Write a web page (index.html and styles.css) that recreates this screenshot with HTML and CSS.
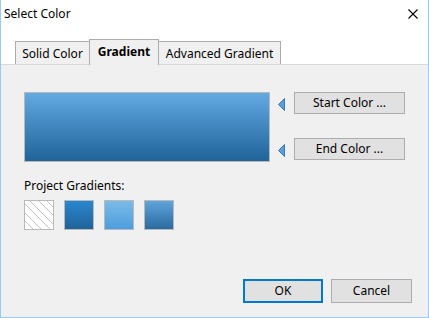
FILE: index.html
```html
<!DOCTYPE html>
<html>
<head>
<meta charset="utf-8">
<link rel="stylesheet" href="styles.css">
</head>
<body>
<div class="window">
  <div class="titlebar">
    <span class="title">Select Color</span>
    <svg class="close" width="10" height="10" viewBox="0 0 10 10"><path d="M0.5 0.5 L9.5 9.5 M9.5 0.5 L0.5 9.5" stroke="#000" stroke-width="1.1" fill="none"/></svg>
  </div>
  <div class="tabs">
    <div class="tab tab-solid">Solid Color</div>
    <div class="tab tab-grad active">Gradient</div>
    <div class="tab tab-adv">Advanced Gradient</div>
  </div>
  <div class="panel">
    <div class="editor">
      <div class="preview"></div>
      <div class="stops">
        <div class="stop">
          <svg class="marker" width="7" height="13" viewBox="0 0 7 13"><polygon points="6.5,0.5 6.5,12.5 0.5,6.5" fill="#5c9fdc" stroke="#3577bd" stroke-width="1"/></svg>
          <button class="btn stop-btn">Start Color ...</button>
        </div>
        <div class="stop">
          <svg class="marker" width="7" height="13" viewBox="0 0 7 13"><polygon points="6.5,0.5 6.5,12.5 0.5,6.5" fill="#5c9fdc" stroke="#3577bd" stroke-width="1"/></svg>
          <button class="btn stop-btn">End Color ...</button>
        </div>
      </div>
    </div>
    <div class="label">Project Gradients:</div>
    <div class="swatches">
      <div class="swatch sw-none"></div>
      <div class="swatch sw-1"></div>
      <div class="swatch sw-2"></div>
      <div class="swatch sw-3"></div>
    </div>
    <div class="actions">
      <button class="btn action default">OK</button>
      <button class="btn action">Cancel</button>
    </div>
  </div>
</div>
</body>
</html>
```
FILE: styles.css
```css
html, body {
  margin: 0;
  padding: 0;
  background: #ffffff;
}
body {
  font-family: "Noto Sans", "Open Sans", sans-serif;
  font-size: 12px;
  color: #000;
}
.window {
  width: 429px;
  height: 318px;
  box-sizing: border-box;
  border: 1px solid #99c9fb;
  border-top: none;
  background: #ffffff;
  display: flex;
  flex-direction: column;
}
.titlebar {
  height: 28px;
  display: flex;
  align-items: center;
  justify-content: space-between;
  padding-left: 3px;
  padding-right: 10px;
  flex: none;
}
.title {
  line-height: 16px;
}
.close {
  display: block;
}
.tabs {
  display: flex;
  align-items: flex-end;
  padding-top: 11px;
  padding-left: 14px;
  height: 25px;
  flex: none;
}
.tab {
  box-sizing: border-box;
  height: 23px;
  border: 1px solid #acacac;
  border-bottom: none;
  background: #f0f0f0;
  display: flex;
  align-items: center;
  justify-content: center;
  line-height: 16px;
  padding-top: 2px;
}
.tab-solid { width: 75px; }
.tab-grad { width: 70px; margin-left: -1px; }
.tab-adv { width: 123px; margin-left: -1px; }
.tab.active {
  height: 26px;
  margin-bottom: -1px;
  font-weight: bold;
  position: relative;
  z-index: 1;
  padding-top: 0;
  padding-bottom: 2px;
}
.panel {
  flex: 1;
  background: #f0f0f0;
  border-top: 1px solid #d9d9d9;
  padding: 27px 16px 14px 23px;
  display: flex;
  flex-direction: column;
  min-height: 0;
}
.editor {
  display: flex;
  align-items: flex-start;
}
.preview {
  width: 246px;
  height: 70px;
  box-sizing: border-box;
  border: 1px solid #b9b9b9;
  background: linear-gradient(to bottom, #63aae3, #1f6399);
}
.stops {
  display: flex;
  flex-direction: column;
  gap: 24px;
  margin-left: 8px;
}
.stop {
  display: flex;
  align-items: center;
  gap: 9px;
}
.marker {
  display: block;
  margin-top: 2px;
}
.btn {
  font-family: inherit;
  font-size: 12px;
  color: #000;
  background: #e1e1e1;
  border: 1px solid #adadad;
  box-sizing: border-box;
  padding: 0;
  margin: 0;
  line-height: 16px;
}
.stop-btn {
  width: 111px;
  height: 22px;
}
.label {
  margin-top: 16px;
  line-height: 16px;
}
.swatches {
  display: flex;
  gap: 10px;
  margin-top: 6px;
}
.swatch {
  width: 30px;
  height: 30px;
  box-sizing: border-box;
  border: 1px solid #b9b9b9;
}
.sw-none {
  background-color: #ffffff;
  background-image: repeating-linear-gradient(45deg, #ffffff 0px, #ffffff 5px, #c4c4c4 5px, #c4c4c4 6px);
}
.sw-1 { background: linear-gradient(to bottom, #2a86cf, #1f6399); }
.sw-2 { background: linear-gradient(to bottom, #7bbae7, #4c9edf); }
.sw-3 { background: linear-gradient(to bottom, #5fa5da, #2a6a9f); }
.actions {
  margin-top: auto;
  display: flex;
  justify-content: flex-end;
  gap: 8px;
}
.action {
  width: 81px;
  height: 24px;
}
.action.default {
  border: 2px solid #0078d7;
  width: 80px;
}
```
